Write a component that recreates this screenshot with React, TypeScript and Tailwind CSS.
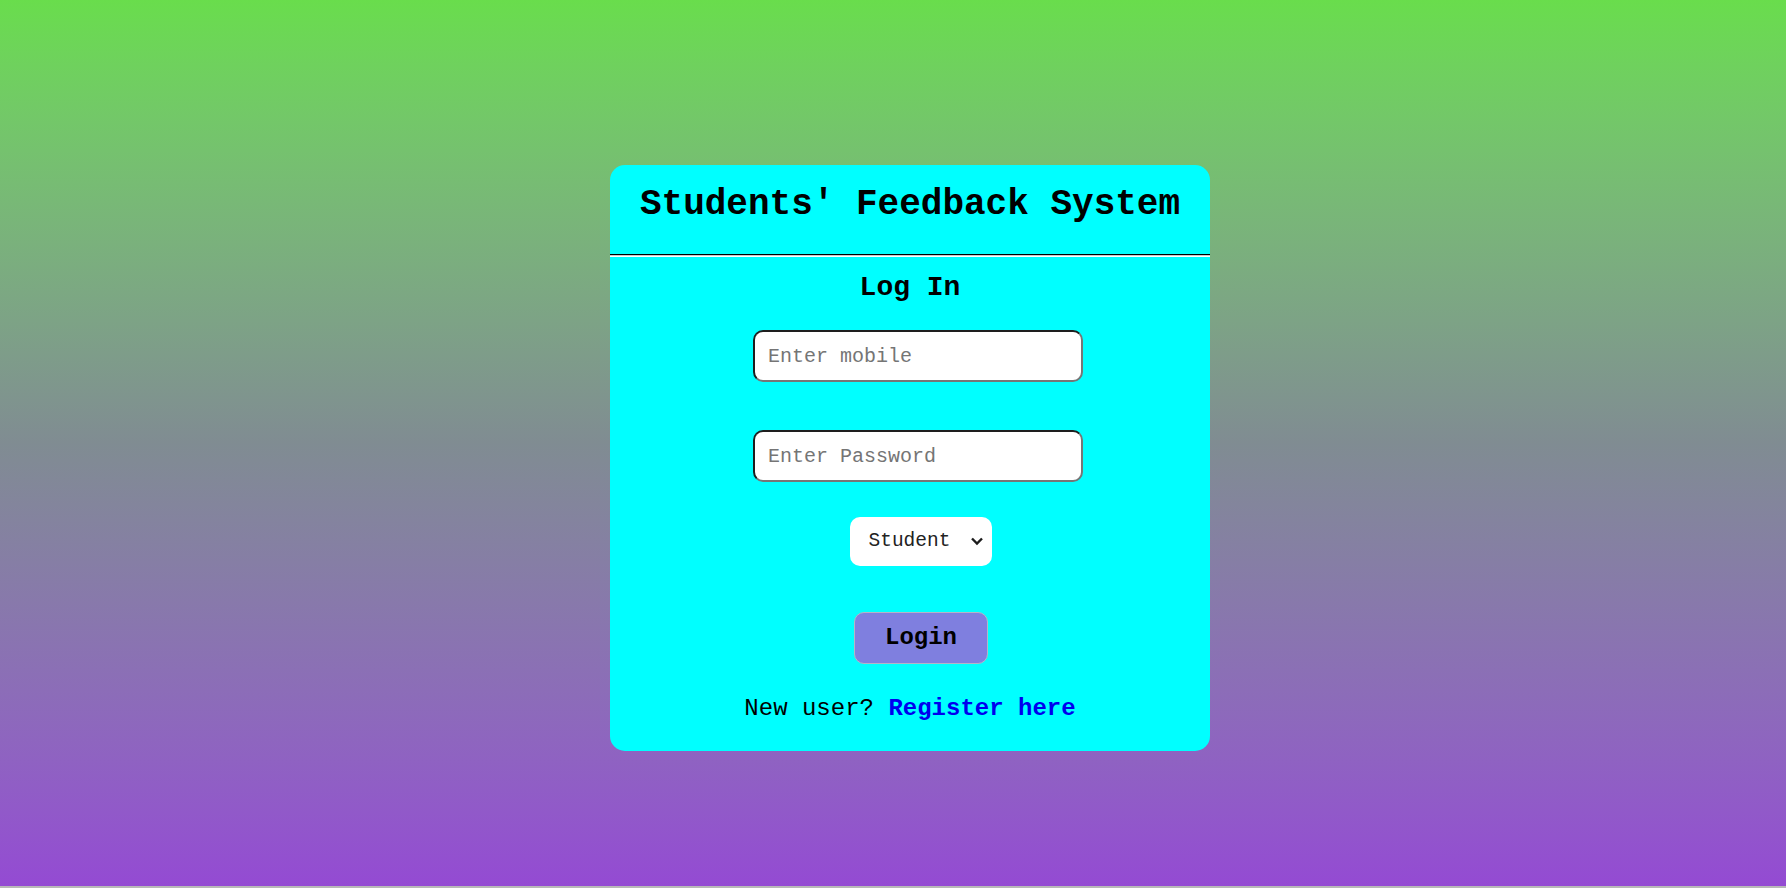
import React from 'react';

const mono = "font-['Liberation_Mono','Courier_New',monospace]";

/**
 * Login card for the students' feedback system
 */
const App: React.FC = () => {
  return (
    <div className={`w-full h-[888px] bg-[#b8b8b8] ${mono}`}>
      <div className="w-full h-[886px] bg-gradient-to-b from-[#69dd4c] via-[#808c92] to-[#944ad3] flex justify-center pl-[34px] pt-[165px]">
        <div className="w-[600px] h-[586px] rounded-[15px] bg-[#00ffff] flex flex-col items-center text-black">
          <h1 className="w-full text-center text-[36px] font-bold leading-none pt-[22px] pb-[31px]">
            Students' Feedback System
          </h1>
          <div className="w-full">
            <div className="h-px bg-black" />
            <div className="h-px bg-[#c8c8c8]" />
            <div className="h-px bg-white" />
          </div>
          <h2 className="mt-[17px] text-[28px] font-bold leading-none">Log In</h2>

          <input
            type="text"
            placeholder="Enter mobile"
            className="mt-[28px] ml-[16px] w-[330px] h-[52px] rounded-[10px] bg-white border-[2.5px] border-t-[#1e1e1e] border-l-[#1e1e1e] border-r-[#767676] border-b-[#767676] pl-[13px] text-[20px] placeholder:text-[#757575] outline-none"
          />
          <input
            type="password"
            placeholder="Enter Password"
            className="mt-[48px] ml-[16px] w-[330px] h-[52px] rounded-[10px] bg-white border-[2.5px] border-t-[#1e1e1e] border-l-[#1e1e1e] border-r-[#767676] border-b-[#767676] pl-[13px] text-[20px] placeholder:text-[#757575] outline-none"
          />

          <div className="relative mt-[35px] ml-[21px] w-[142px] h-[49px]">
            <select className="appearance-none w-full h-full rounded-[10px] bg-white pl-[19px] text-[19.5px] text-[#222] outline-none">
              <option>Student</option>
              <option>Admin</option>
            </select>
            <svg
              className="absolute right-[8px] top-[19px] pointer-events-none"
              width="14"
              height="10"
              viewBox="0 0 14 10"
              fill="none"
            >
              <path d="M2 2.5L7 7.5L12 2.5" stroke="#1c1c1c" strokeWidth="2.4" />
            </svg>
          </div>

          <button className="mt-[46px] ml-[22px] w-[134px] h-[52px] rounded-[10px] bg-[#7f7fdf] border border-[#b4b4c8] text-[24px] font-bold text-black">
            Login
          </button>

          <p className="mt-[33px] text-[24px] leading-none">
            New user? <a href="#" className="font-bold text-[#0000ee]">Register here</a>
          </p>
        </div>
      </div>
    </div>
  );
};

export default App;
